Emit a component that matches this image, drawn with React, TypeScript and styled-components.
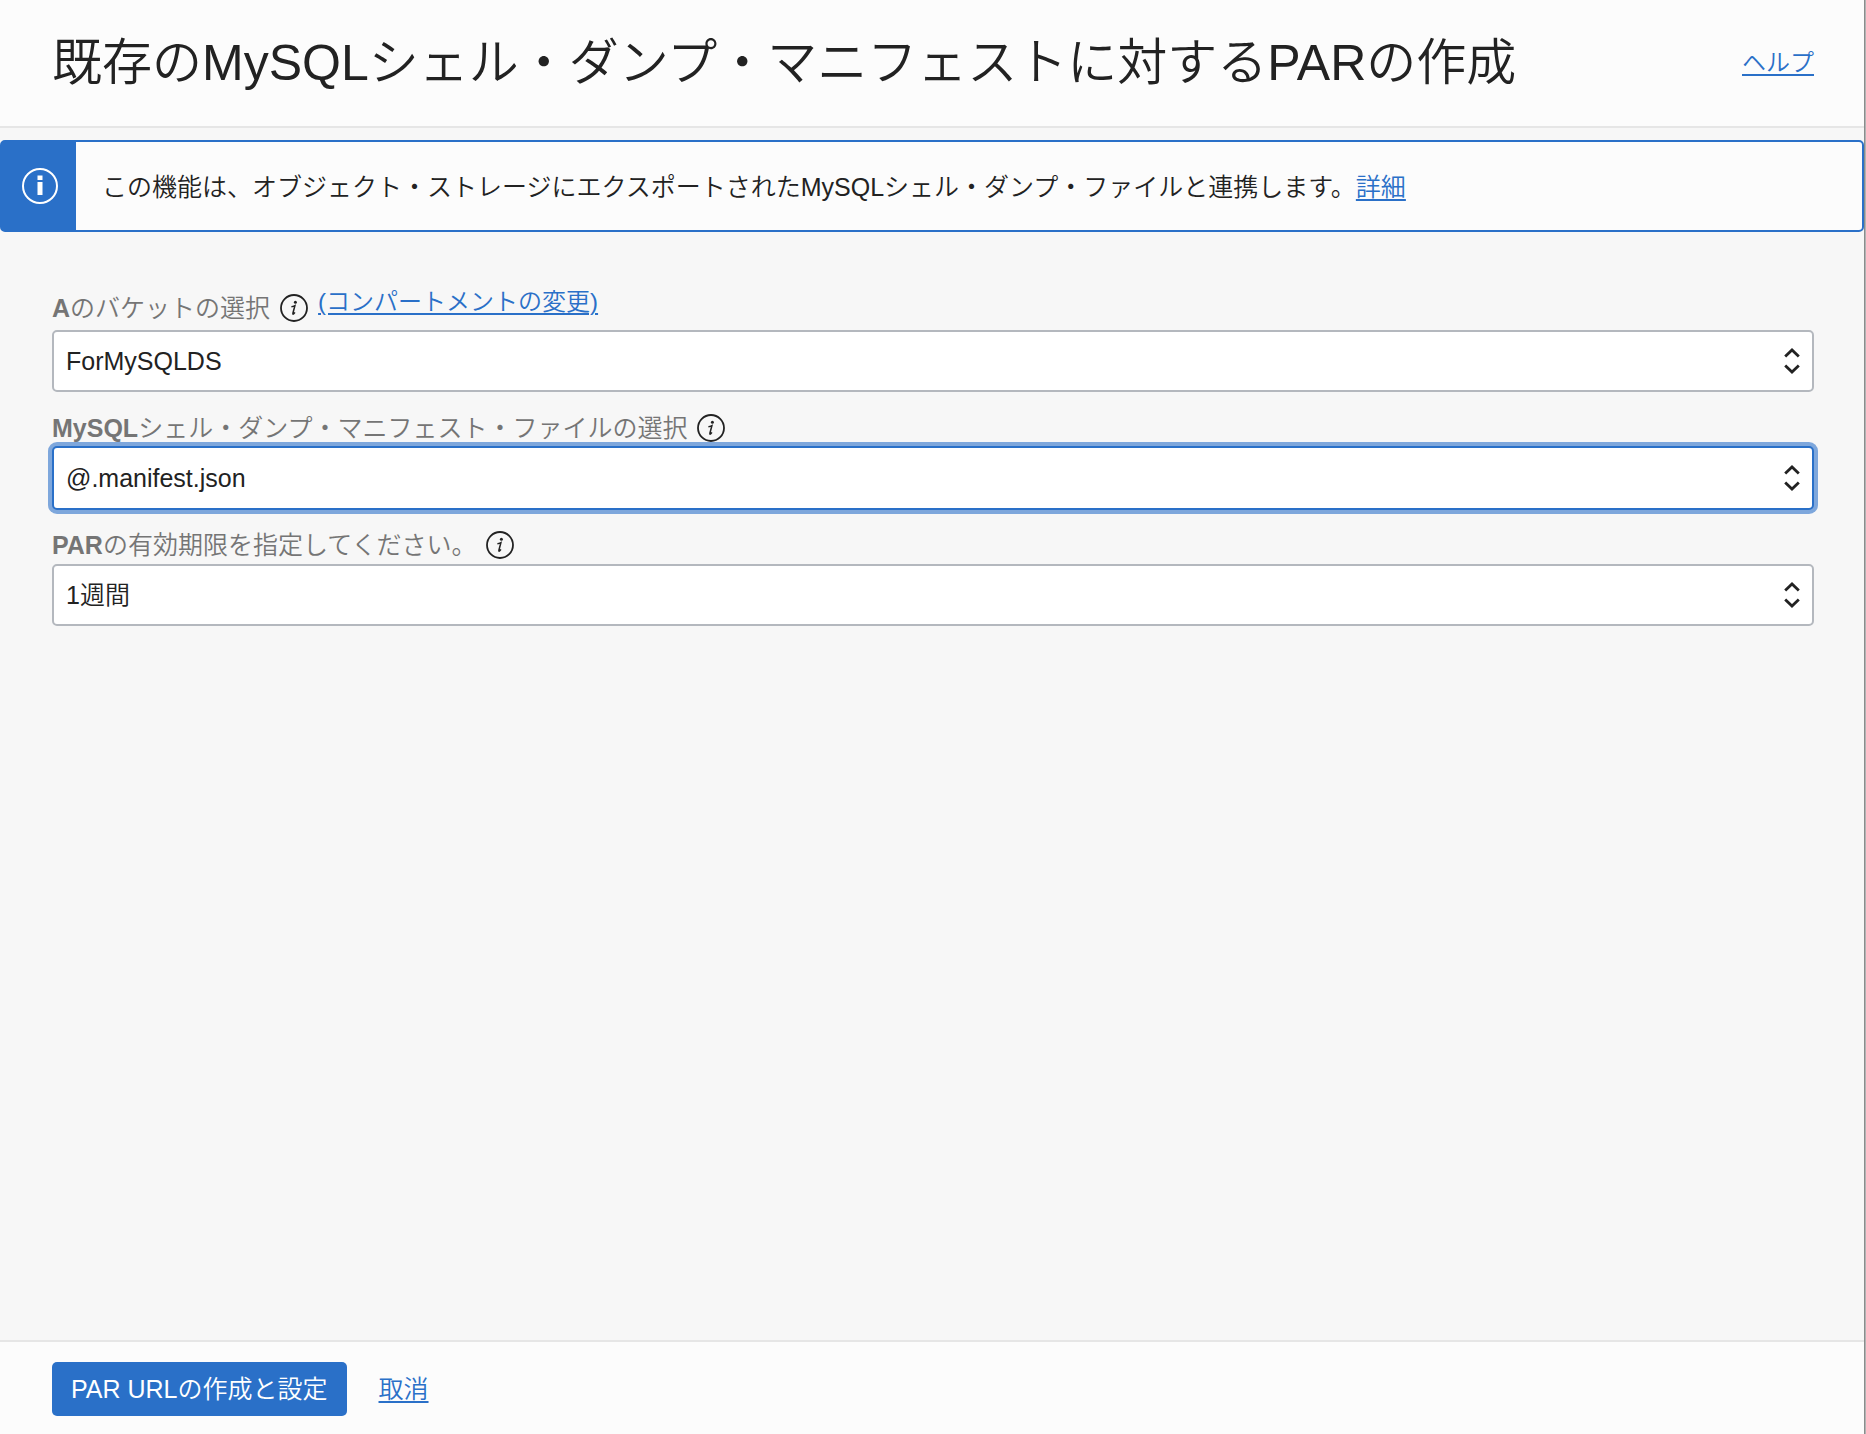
import React from "react";
import styled, { createGlobalStyle } from "styled-components";

const blue = "#2a70c8";

const GlobalStyle = createGlobalStyle`
  *, *::before, *::after { box-sizing: border-box; }
  body {
    margin: 0;
    background: #b1b3b3;
    color: #222;
    font-family: "Liberation Sans", "Noto Sans CJK JP", sans-serif;
    font-size: 25px;
    line-height: 36px;
    font-weight: 350;
  }
`;

const Panel = styled.form`
  display: flex;
  flex-direction: column;
  min-height: 100vh;
  margin-right: 1px;
  border-right: 1px solid #8a8c8c;
  background: #f7f7f7;
`;

const Header = styled.header`
  display: flex;
  align-items: center;
  justify-content: space-between;
  padding: 27px 50px 27px 52px;
  border-bottom: 2px solid #e6e6e6;
  background: #fcfcfc;
`;

const Title = styled.h1`
  margin: 0;
  font-size: 50px;
  line-height: 72px;
  font-weight: 350;
`;

const Link = styled.a<{ $small?: boolean }>`
  color: ${blue};
  font-size: ${(p) => (p.$small ? 24 : 25)}px;
  text-decoration: underline;
  text-decoration-thickness: 2px;
  text-underline-offset: 3px;
`;

const Banner = styled.div`
  display: flex;
  min-height: 92px;
  margin-top: 12px;
  border: 2px solid ${blue};
  border-radius: 5px;
  background: #fcfcfc;
`;

const BannerIcon = styled.span`
  display: flex;
  align-items: center;
  justify-content: center;
  width: 74px;
  padding-left: 2px;
  background: ${blue};
`;

const BannerText = styled.p`
  align-self: center;
  margin: 0;
  padding: 2px 26px 0;
`;

const Fields = styled.main`
  display: flex;
  flex: 1;
  flex-direction: column;
  padding: 53px 50px 40px 52px;
`;

const Field = styled.div`
  display: flex;
  flex-direction: column;
  margin-bottom: 10px;
`;

const LabelRow = styled.div<{ $raised: boolean }>`
  display: flex;
  align-items: center;
  height: 45px;
  padding-top: ${(p) => (p.$raised ? 0 : 6)}px;
`;

const Label = styled.label`
  color: #757575;
  font-size: 25px;
`;

const Latin = styled.span`
  font-weight: 700;
`;

const HintButton = styled.button`
  display: flex;
  margin: 0 10px;
  padding: 0;
  border: 0;
  background: none;
`;

const Lifted = styled.span`
  padding-bottom: 12px;
`;

const SelectBox = styled.div<{ $active?: boolean }>`
  position: relative;
  margin: ${(p) => (p.$active ? "-1px 0" : "0")};
`;

const Select = styled.select<{ $active?: boolean }>`
  display: block;
  width: 100%;
  height: ${(p) => (p.$active ? 64 : 62)}px;
  padding: 0 60px 0 12px;
  border: 2px solid ${(p) => (p.$active ? blue : "#b4b8be")};
  border-radius: 5px;
  outline: 0;
  box-shadow: ${(p) => (p.$active ? "0 0 0 4px #7ea7dc" : "none")};
  background: #fff;
  color: #222;
  font: inherit;
  appearance: none;
`;

const Chevrons = styled.svg`
  position: absolute;
  top: 50%;
  right: 14px;
  transform: translateY(-50%);
  pointer-events: none;
`;

const Footer = styled.footer`
  display: flex;
  align-items: center;
  gap: 32px;
  padding: 20px 52px 18px;
  border-top: 2px solid #e6e6e6;
  background: #fcfcfc;
`;

const PrimaryButton = styled.button`
  height: 54px;
  padding: 0 19px;
  border: 0;
  border-radius: 5px;
  background: ${blue};
  color: #fff;
  font: inherit;
`;

const InfoIcon = () => (
  <svg width="28" height="28" viewBox="0 0 28 28" fill="none" aria-hidden="true">
    <circle cx="14" cy="14" r="13" stroke="#222" strokeWidth="1.8" />
    <circle cx="15.4" cy="8.2" r="1.5" fill="#222" />
    <path d="M11.4 12.8c1.400-.2 2.500-.6 3.500-1.100l-2 7.600c-.2.9.2 1 .7.6.5-.4.9-.9 1.300-1.500" stroke="#222" strokeWidth="1.5" />
  </svg>
);

type FieldProps = {
  id: string;
  latin: string;
  text: string;
  value: string;
  active?: boolean;
  action?: string;
};

const SelectField = ({ id, latin, text, value, active, action }: FieldProps) => (
  <Field>
    <LabelRow $raised={Boolean(action)}>
      <Label htmlFor={id}>
        <Latin>{latin}</Latin>
        {text}
      </Label>
      <HintButton type="button" aria-label="情報">
        <InfoIcon />
      </HintButton>
      {action && (
        <Lifted>
          <Link $small href="#compartment">{action}</Link>
        </Lifted>
      )}
    </LabelRow>
    <SelectBox $active={active}>
      <Select id={id} $active={active} defaultValue={value}>
        <option>{value}</option>
      </Select>
      <Chevrons width="16" height="28" viewBox="0 0 16 28" fill="none" stroke="#222" strokeWidth="2.8">
        <path d="M1.2 9.6 8 3l6.8 6.6M1.2 18.400 8 25l6.8-6.6" />
      </Chevrons>
    </SelectBox>
  </Field>
);

export default function App() {
  return (
    <>
      <GlobalStyle />
      <Panel onSubmit={(e: React.FormEvent) => e.preventDefault()}>
        <Header>
          <Title>既存のMySQLシェル・ダンプ・マニフェストに対するPARの作成</Title>
          <Link $small href="#help">ヘルプ</Link>
        </Header>
        <Banner>
          <BannerIcon>
            <svg width="36" height="36" viewBox="0 0 36 36" fill="none" aria-hidden="true">
              <circle cx="18" cy="18" r="17" stroke="#fff" strokeWidth="2" />
              <path d="M15.500 7.500h5v4.500h-5zM15.500 14h5v13h-5z" fill="#fff" />
            </svg>
          </BannerIcon>
          <BannerText>
            この機能は、オブジェクト・ストレージにエクスポートされたMySQLシェル・ダンプ・ファイルと連携します。
            <Link href="#details">詳細</Link>
          </BannerText>
        </Banner>
        <Fields>
          <SelectField id="bucket" latin="A" text="のバケットの選択" value="ForMySQLDS" action="(コンパートメントの変更)" />
          <SelectField id="manifest" latin="MySQL" text="シェル・ダンプ・マニフェスト・ファイルの選択" value="@.manifest.json" active />
          <SelectField id="expiry" latin="PAR" text="の有効期限を指定してください。" value="1週間" />
        </Fields>
        <Footer>
          <PrimaryButton type="submit">PAR URLの作成と設定</PrimaryButton>
          <Link href="#cancel">取消</Link>
        </Footer>
      </Panel>
    </>
  );
}
